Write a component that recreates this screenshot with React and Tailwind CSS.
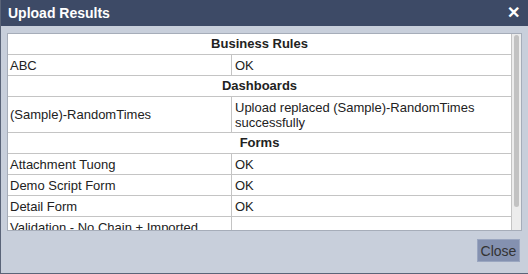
import React from "react";

const F = { fontFamily: '"Liberation Sans", Arial, sans-serif' };

function Header({ children }) {
  return (
    <div className="h-[21px] border-b border-[#c4c4c4] flex items-center justify-center font-bold text-[13px] text-[#222]">
      {children}
    </div>
  );
}

function Row({ a, b, tall }) {
  return (
    <div className={`flex border-b border-[#c4c4c4] text-[13px] text-[#222] leading-[15px] ${tall ? "h-[36px]" : "h-[21px]"}`}>
      <div className="w-[224px] shrink-0 border-r border-[#c4c4c4] pl-[2px] flex items-center whitespace-nowrap">{a}</div>
      <div className="flex-1 pl-[3px] pr-[4px] flex items-center">{b}</div>
    </div>
  );
}

export default function App() {
  return (
    <div style={F} className="w-[528px] h-[274px] flex flex-col bg-[#c8cfdb] border-l border-b border-[#5a6478] overflow-hidden">
      <div className="h-[26px] shrink-0 bg-[#3d4a66] flex items-center justify-between pl-[7px] pr-[8px]">
        <span className="text-white font-bold text-[14px]">Upload Results</span>
        <span className="text-white font-bold text-[16px] leading-none">✕</span>
      </div>
      <div className="pt-[7px] pl-[6px] pr-[6px]">
        <div className="h-[198px] border border-[#a6adb9] flex bg-white">
          <div className="flex-1 overflow-hidden border-r border-[#c4c4c4]">
            <Header>Business Rules</Header>
            <Row a="ABC" b="OK" />
            <Header>Dashboards</Header>
            <Row a="(Sample)-RandomTimes" b="Upload replaced (Sample)-RandomTimes successfully" tall />
            <Header>Forms</Header>
            <Row a="Attachment Tuong" b="OK" />
            <Row a="Demo Script Form" b="OK" />
            <Row a="Detail Form" b="OK" />
            <Row a="Validation - No Chain + Imported" b="" />
          </div>
          <div className="w-[9px] shrink-0 bg-[#ececec] pt-[1px] flex justify-center">
            <div className="w-[5px] h-[172px] rounded-full bg-[#c2c2c2]" />
          </div>
        </div>
      </div>
      <div className="flex justify-end pr-[8px] pt-[8px]">
        <button className="w-[43px] h-[23px] bg-[#8491b0] border border-[#9aa6c0] text-[#333] text-[14px] leading-none flex items-center justify-center">
          Close
        </button>
      </div>
    </div>
  );
}
